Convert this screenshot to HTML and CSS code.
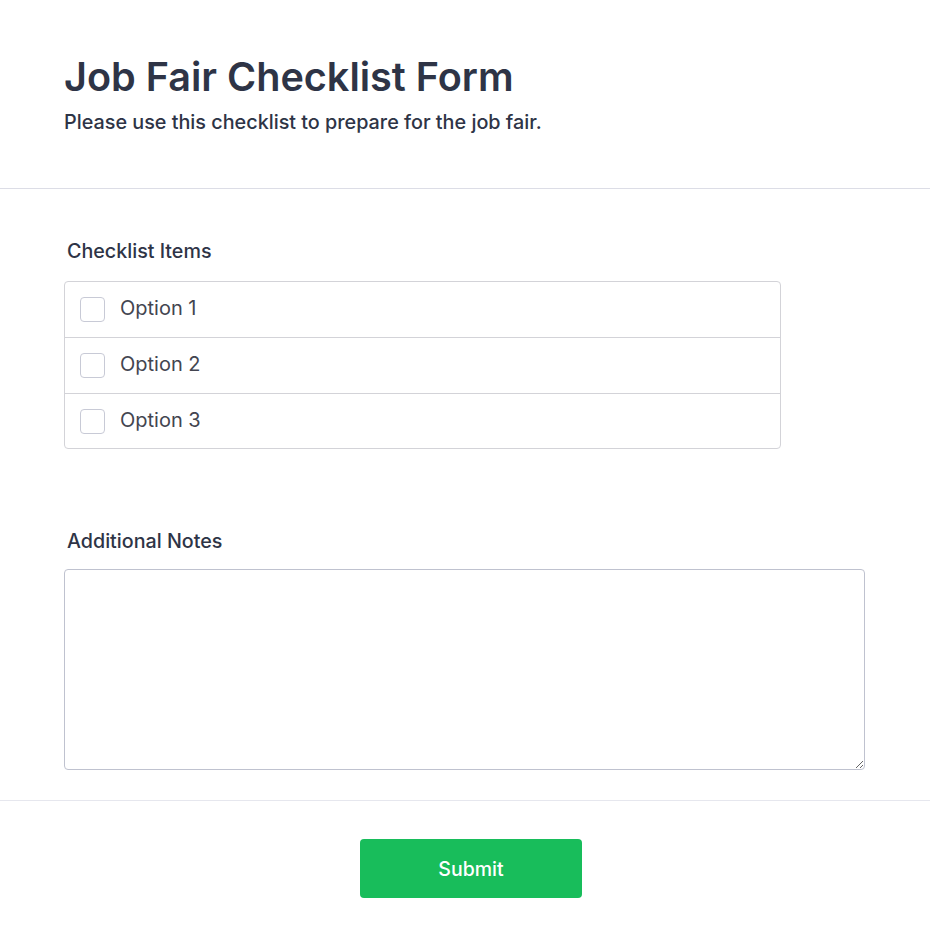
FILE: index.html
```html
<!DOCTYPE html>
<html>
<head>
<meta charset="utf-8">
<link rel="stylesheet" href="styles.css">
</head>
<body>
<header class="head">
  <h1 class="title">Job Fair Checklist Form</h1>
  <p class="subtitle">Please use this checklist to prepare for the job fair.</p>
</header>
<form class="form">
  <div class="field">
    <label class="label">Checklist Items</label>
    <div class="checklist">
      <label class="row"><span class="box"></span><span class="opt">Option 1</span></label>
      <label class="row"><span class="box"></span><span class="opt">Option 2</span></label>
      <label class="row"><span class="box"></span><span class="opt">Option 3</span></label>
    </div>
  </div>
  <div class="field notes">
    <label class="label">Additional Notes</label>
    <textarea class="area"></textarea>
  </div>
</form>
<footer class="foot">
  <button class="submit" type="button">Submit</button>
</footer>
</body>
</html>
```
FILE: styles.css
```css
* { box-sizing: border-box; }
body {
  margin: 0;
  font-family: Inter, "Noto Sans", sans-serif;
  color: #2d3142;
  background: #fff;
}
.head {
  padding: 53px 64px 0;
  height: 189px;
  border-bottom: 1px solid #dcdde6;
}
.title {
  margin: 0;
  font-size: 39.6px;
  font-weight: 600;
  line-height: 48px;
  color: #2e3446;
}
.subtitle {
  margin: 8px 0 0;
  font-size: 19.8px;
  line-height: 26px;
  font-weight: 500;
  color: #2e3446;
}
.form {
  padding: 0 64px;
  height: 612px;
  border-bottom: 1px solid #e6e7ee;
}
.field {
  padding-top: 49px;
}
.label {
  display: block;
  padding-left: 3px;
  font-size: 19.7px;
  line-height: 26px;
  font-weight: 500;
  color: #2e3446;
  margin-bottom: 17px;
}
.checklist {
  width: 717px;
  border: 1px solid #d3d3d8;
  border-radius: 4px;
}
.row {
  display: flex;
  align-items: center;
  height: 56px;
  padding-left: 15px;
  border-top: 1px solid #d3d3d8;
}
.row:first-child {
  height: 55px;
  border-top: none;
}
.row:last-child {
  height: 55px;
}
.box {
  width: 25px;
  height: 25px;
  border: 1px solid #c8cad6;
  border-radius: 4px;
  margin-right: 15px;
}
.opt {
  font-size: 20px;
  line-height: 24px;
  margin-bottom: 3px;
  color: #434550;
}
.notes { padding-top: 79px; }
.notes .label { margin-bottom: 15px; }
.area {
  display: block;
  width: 801px;
  height: 201px;
  border: 1px solid #bfc2cf;
  border-radius: 4px;
  resize: vertical;
  font-family: inherit;
}
.foot {
  display: flex;
  justify-content: center;
  padding-top: 38px;
  padding-left: 12px;
}
.submit {
  width: 222px;
  height: 59px;
  border: none;
  border-radius: 4px;
  background: #18bd5b;
  color: #fff;
  font-family: Inter, sans-serif;
  font-size: 19.5px;
  font-weight: 500;
}
```
